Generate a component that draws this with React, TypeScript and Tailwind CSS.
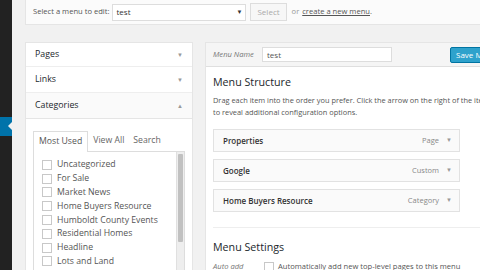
import React from 'react';

const CATEGORIES = [
  'Uncategorized',
  'For Sale',
  'Market News',
  'Home Buyers Resource',
  'Humboldt County Events',
  'Residential Homes',
  'Headline',
  'Lots and Land',
];

const MENU_ITEMS = [
  { title: 'Properties', type: 'Page' },
  { title: 'Google', type: 'Custom' },
  { title: 'Home Buyers Resource', type: 'Category' },
];

const Caret = ({ up = false }: { up?: boolean }) => (
  <span className="text-[6px] text-[#999] leading-none">{up ? '▲' : '▼'}</span>
);

const Box = () => <span className="w-[10px] h-[10px] border border-[#c8c8c8] bg-white shrink-0" />;

const App: React.FC = () => {
  return (
    <div className="w-[480px] h-[270px] overflow-hidden flex bg-[#f1f1f1] font-['Open_Sans',sans-serif] text-[#444]">
      {/* admin menu strip */}
      <aside className="w-[12px] shrink-0 bg-[#222] flex flex-col">
        <div className="h-[117px] shrink-0" />
        <div className="relative h-[19px] shrink-0 bg-[#0073aa]">
          <span className="absolute right-0 top-[5px] w-0 h-0 border-y-[4px] border-y-transparent border-r-[4px] border-r-[#f1f1f1]" />
        </div>
      </aside>

      <main className="flex-1 pl-[13px] flex flex-col min-w-0 overflow-hidden">
        {/* select menu bar */}
        <div className="h-[25px] shrink-0 bg-[#fbfbfb] border-l border-b border-[#e5e5e5] flex items-center pl-[7px] text-[7.6px] text-[#555] whitespace-nowrap">
          <span>Select a menu to edit:</span>
          <div className="ml-[3px] w-[134px] h-[17px] bg-white border border-[#ddd] flex items-center justify-between px-[3px] text-[8px] text-[#333]">
            <span>test</span>
            <span className="text-[6px] text-[#333]">▼</span>
          </div>
          <div className="ml-[4px] h-[18px] px-[6px] border border-[#ddd] bg-[#f7f7f7] flex items-center text-[8px] text-[#aaa]">Select</div>
          <span className="ml-[5px] text-[#999]">or</span>
          <span className="ml-[3px] text-[#555] underline">create a new menu</span>
          <span>.</span>
        </div>

        <div className="mt-[17px] flex gap-[12px] flex-1 min-h-0 items-start">
          {/* left column */}
          <div className="w-[168px] shrink-0 bg-white border border-[#e5e5e5] flex flex-col">
            <div className="h-[24px] shrink-0 px-[9px] flex items-center justify-between border-b border-[#eee] text-[8.8px] text-[#23282d]">
              <span>Pages</span>
              <Caret />
            </div>
            <div className="h-[26px] shrink-0 px-[9px] flex items-center justify-between border-b border-[#eee] text-[8.8px] text-[#23282d]">
              <span>Links</span>
              <Caret />
            </div>
            <div className="h-[26px] shrink-0 px-[9px] flex items-center justify-between border-b border-[#e5e5e5] bg-[#fafafa] text-[8.8px] text-[#23282d]">
              <span>Categories</span>
              <Caret up />
            </div>
            <div className="shrink-0 pt-[12px] px-[7px]">
              <div className="flex items-end h-[20px] text-[8.7px] text-[#555]">
                <span className="h-[21px] px-[5px] border border-b-0 border-[#ddd] bg-white flex items-center relative top-[1px]">Most Used</span>
                <span className="ml-[5px] h-[20px] flex items-center text-[#666]">View All</span>
                <span className="ml-[9px] h-[20px] flex items-center text-[#666]">Search</span>
              </div>
              <div className="border border-[#ddd] bg-white flex h-[140px]">
                <ul className="flex-1 pt-[6px] pl-[8px] flex flex-col">
                  {CATEGORIES.map((c) => (
                    <li key={c} className="h-[13.8px] shrink-0 flex items-center gap-[5px] text-[8.7px] text-[#555]">
                      <Box />
                      <span>{c}</span>
                    </li>
                  ))}
                </ul>
                <div className="w-[8px] bg-[#eee] border-l border-[#e0e0e0] py-[2px] px-[1px]">
                  <div className="h-[88px] bg-[#c1c1c1] rounded-[1px]" />
                </div>
              </div>
            </div>
          </div>

          {/* right column */}
          <div className="w-[320px] shrink-0 bg-white border border-[#e5e5e5] flex flex-col">
            <div className="h-[24px] shrink-0 bg-[#f5f5f5] border-b border-[#dfdfdf] flex items-center pl-[7px] whitespace-nowrap">
              <span className="italic text-[7.6px] text-[#777] w-[49px]">Menu Name</span>
              <div className="w-[130px] h-[15px] bg-white border border-[#ddd] flex items-center px-[4px] text-[8px] text-[#555]">test</div>
              <div className="ml-[58px] h-[16px] px-[5px] bg-[#2ea2cc] border border-[#0074a2] rounded-[2px] flex items-center text-[8px] text-white">Save Menu</div>
            </div>
            <div className="shrink-0 pl-[7px] pr-[10px] pt-[8px]">
              <h3 className="text-[10.7px] text-[#23282d] leading-[14px]">Menu Structure</h3>
              <p className="mt-[5px] text-[7.4px] leading-[12px] text-[#555] whitespace-nowrap">
                Drag each item into the order you prefer. Click the arrow on the right of the item
                <br />
                to reveal additional configuration options.
              </p>
              <div className="mt-[11px] flex flex-col gap-[7px]">
                {MENU_ITEMS.map((m) => (
                  <div
                    key={m.title}
                    className="w-[247px] h-[23px] shrink-0 bg-[#fafafa] border border-[#e2e2e2] flex items-center justify-between pl-[9px] pr-[7px]"
                  >
                    <span className="text-[8px] font-semibold text-[#333]">{m.title}</span>
                    <span className="flex items-center gap-[7px] text-[7.5px] text-[#888]">
                      {m.type}
                      <span className="text-[6px] text-[#999]">▼</span>
                    </span>
                  </div>
                ))}
              </div>
              <div className="mt-[15px] border-t border-[#eee] pt-[12px]">
                <h3 className="text-[10.7px] text-[#23282d] leading-[14px]">Menu Settings</h3>
                <div className="mt-[7px] flex items-center text-[7.6px] whitespace-nowrap">
                  <span className="italic text-[#777] w-[51px]">Auto add</span>
                  <Box />
                  <span className="ml-[4px] text-[#555]">Automatically add new top-level pages to this menu</span>
                </div>
              </div>
            </div>
          </div>
        </div>
      </main>
    </div>
  );
};

export default App;
